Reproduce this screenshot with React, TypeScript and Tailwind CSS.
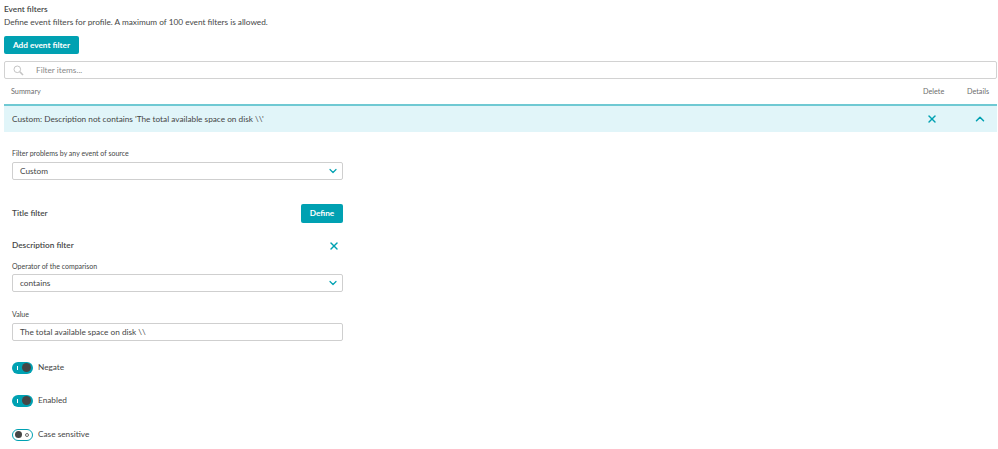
import React from 'react'
import { ChevronDown, ChevronUp, X } from 'lucide-react'

function Toggle({ on, label }: { on: boolean; label: string }) {
  return (
    <div className="flex items-center h-[13px] gap-[5px]">
      {on ? (
        <div className="w-[21px] h-[12px] rounded-full bg-[#00a1b2] flex items-center justify-end pr-[2px] relative">
          <span className="absolute left-[5px] top-[4px] w-px h-[4px] bg-white" />
          <span className="w-[9px] h-[9px] rounded-full bg-[#454646]" />
        </div>
      ) : (
        <div className="w-[21px] h-[12px] rounded-full border border-[#00a1b2] bg-white flex items-center justify-between pl-[2px] pr-[3px]">
          <span className="w-[7px] h-[7px] rounded-full bg-[#454646]" />
          <span className="w-[4px] h-[4px] rounded-full border border-[#6d6d6d]" />
        </div>
      )}
      <span className="text-[8.25px] text-[#454646]">{label}</span>
    </div>
  )
}

function SelectBox({ value }: { value: string }) {
  return (
    <div className="h-[18px] border border-[#cfcfcf] rounded-[2px] bg-white flex items-center justify-between pl-[7px] pr-[3px] text-[8.25px] text-[#454646]">
      <span>{value}</span>
      <ChevronDown size={12} strokeWidth={2.4} className="text-[#00a1b2]" />
    </div>
  )
}

export default function App() {
  return (
    <div className="w-[998px] h-[449px] bg-white overflow-hidden pl-[4px] pr-[1px] pt-[4px] text-[#454646] font-['Lato',sans-serif]">
      <div className="text-[8.25px] font-semibold leading-[11px] h-[12px]">Event filters</div>
      <div className="text-[8.25px] leading-[11px] h-[12px] mt-[1px]">Define event filters for profile. A maximum of 100 event filters is allowed.</div>

      <button className="mt-[7px] block w-[75px] h-[18px] rounded-[2px] bg-[#00a1b2] text-white text-[8.25px] font-bold">Add event filter</button>

      <div className="mt-[7px] h-[18px] border border-[#d2d2d2] rounded-[2px] flex items-center pl-[8px]">
        <svg width="11" height="11" viewBox="0 0 11 11" fill="none" stroke="#c4c4c4">
          <circle cx="4.3" cy="4.3" r="3.3" strokeWidth="1" />
          <path d="M6.8 6.8 L10 10" strokeWidth="1.6" />
        </svg>
        <span className="ml-[12px] text-[8.25px] text-[#898989]">Filter items...</span>
      </div>

      <div className="h-[25px] flex items-center pl-[7px] pt-[2px] text-[7.25px] text-[#6d6d6d]">
        <span className="flex-1">Summary</span>
        <span className="w-[44px]">Delete</span>
        <span className="w-[30px]">Details</span>
      </div>

      <div className="h-[28px] border-t-2 border-[#6fc9d3] bg-[#e1f5f9] flex items-center pl-[8px] text-[8.25px]">
        <span className="flex-1">Custom: Description not contains 'The total available space on disk \\'</span>
        <X size={12} strokeWidth={2.8} className="text-[#00a1b2] mr-[35px]" />
        <ChevronUp size={14} strokeWidth={2.6} className="text-[#00a1b2] mr-[10px]" />
      </div>

      <div className="w-[331px] ml-[8px]">
        <div className="mt-[16px] text-[7px] leading-[10px] h-[10px]">Filter problems by any event of source</div>
        <div className="mt-[4px]"><SelectBox value="Custom" /></div>

        <div className="mt-[24px] h-[19px] flex items-center justify-between">
          <span className="text-[8.25px] font-semibold">Title filter</span>
          <button className="w-[42px] h-[19px] rounded-[2px] bg-[#00a1b2] text-white text-[8.25px] font-bold">Define</button>
        </div>

        <div className="mt-[16px] h-[13px] flex items-center justify-between pr-[3px]">
          <span className="text-[8.25px] font-semibold">Description filter</span>
          <X size={12} strokeWidth={2.8} className="text-[#00a1b2]" />
        </div>

        <div className="mt-[9px] text-[7px] leading-[10px] h-[10px]">Operator of the comparison</div>
        <div className="mt-[3px]"><SelectBox value="contains" /></div>

        <div className="mt-[17px] text-[7px] leading-[10px] h-[10px]">Value</div>
        <div className="mt-[4px] h-[18px] border border-[#cfcfcf] rounded-[2px] flex items-center pl-[7px] text-[8.25px]">The total available space on disk \\</div>

        <div className="mt-[20px]"><Toggle on label="Negate" /></div>
        <div className="mt-[20px]"><Toggle on label="Enabled" /></div>
        <div className="mt-[21px]"><Toggle on={false} label="Case sensitive" /></div>
      </div>
    </div>
  )
}
